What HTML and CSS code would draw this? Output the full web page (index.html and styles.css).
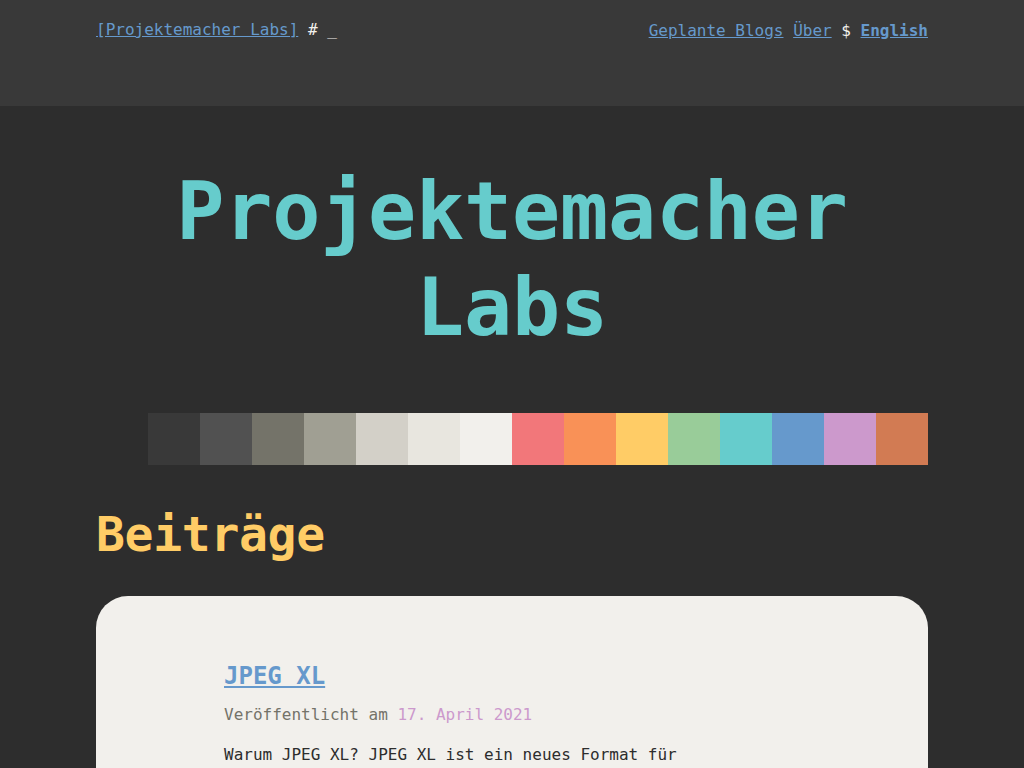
FILE: index.html
```html
<!DOCTYPE html>
<html lang="de">
<head>
<meta charset="utf-8">
<title>Projektemacher Labs</title>
<link rel="stylesheet" href="styles.css">
</head>
<body>
<header class="site-header">
  <div class="brand"><a href="#">[Projektemacher Labs]</a> # _</div>
  <nav class="nav"><a href="#">Geplante Blogs</a> <a href="#">Über</a> $ <a href="#" class="lang">English</a></nav>
</header>
<main class="main">
  <h1 class="title">Projektemacher<br>Labs</h1>
  <div class="palette">
    <span class="sw c00"></span><span class="sw c01"></span><span class="sw c02"></span><span class="sw c03"></span>
    <span class="sw c04"></span><span class="sw c05"></span><span class="sw c06"></span><span class="sw c07"></span>
    <span class="sw c08"></span><span class="sw c09"></span><span class="sw c0a"></span><span class="sw c0b"></span>
    <span class="sw c0c"></span><span class="sw c0d"></span><span class="sw c0e"></span><span class="sw c0f"></span>
  </div>
  <h2 class="section">Beiträge</h2>
  <article class="card">
    <h3 class="post-title"><a href="#">JPEG XL</a></h3>
    <p class="meta">Veröffentlicht am <span class="date">17. April 2021</span></p>
    <p class="excerpt">Warum JPEG XL? JPEG XL ist ein neues Format für Bildkomprimierung, das sowohl verlustfreie als auch verlustbehaftete Kompression unterstützt.</p>
  </article>
</main>
</body>
</html>
```
FILE: styles.css
```css
html, body {
  margin: 0;
  padding: 0;
  background: #2d2d2d;
  color: #f2f0ec;
  font-family: "DejaVu Sans Mono", "Liberation Mono", monospace;
  font-size: 16px;
  line-height: 24px;
}
a { color: #6699cc; }
.site-header {
  background: #393939;
  height: 106px;
  box-sizing: border-box;
  padding: 18px 96px 0;
  display: flex;
  justify-content: space-between;
  align-items: flex-start;
}
.brand, .nav { white-space: pre; }
.nav { padding-top: 1px; }
.nav .lang { font-weight: bold; }
.main {
  width: 832px;
  margin: 0 auto;
}
.title {
  margin: 58px 0 0;
  font-size: 80px;
  line-height: 96px;
  font-weight: bold;
  color: #66cccc;
  text-align: center;
  letter-spacing: -0.2px;
}
.palette {
  display: flex;
  margin-top: 57px;
  height: 52px;
}
.sw { flex: 1; }
.c00 { background: #2d2d2d; }
.c01 { background: #393939; }
.c02 { background: #515151; }
.c03 { background: #747369; }
.c04 { background: #a09f93; }
.c05 { background: #d3d0c8; }
.c06 { background: #e8e6df; }
.c07 { background: #f2f0ec; }
.c08 { background: #f2777a; }
.c09 { background: #f99157; }
.c0a { background: #ffcc66; }
.c0b { background: #99cc99; }
.c0c { background: #66cccc; }
.c0d { background: #6699cc; }
.c0e { background: #cc99cc; }
.c0f { background: #d27b53; }
.section {
  margin: 40px 0 0;
  font-size: 48px;
  line-height: 58px;
  font-weight: bold;
  color: #ffcc66;
  letter-spacing: -0.3px;
}
.card {
  margin-top: 33px;
  background: #f2f0ec;
  border-radius: 32px;
  padding: 66px 128px 60px;
  color: #2d2d2d;
}
.post-title {
  margin: 0;
  font-size: 24px;
  line-height: 29px;
  font-weight: bold;
}
.post-title a { color: #6699cc; }
.meta {
  margin: 12px 0 0;
  color: #747369;
}
.date { color: #cc99cc; }
.excerpt {
  margin: 16px 0 0;
  color: #2d2d2d;
}
```
